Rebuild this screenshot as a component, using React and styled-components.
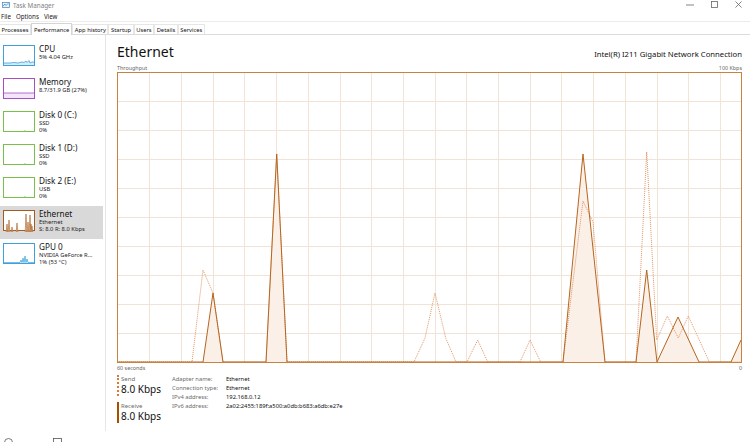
import React from "react";
import styled, { createGlobalStyle } from "styled-components";

const Global = createGlobalStyle`
  html, body { margin: 0; padding: 0; background: #fff; }
  body { font-family: "Noto Sans", "Open Sans", sans-serif; color: #000; }
  * { box-sizing: border-box; }
`;

const Window = styled.div`
  width: 750px;
  height: 442px;
  overflow: hidden;
  display: flex;
  flex-direction: column;
  background: #fff;
`;

const TitleBar = styled.div`
  height: 11px;
  display: flex;
  align-items: center;
  padding-left: 2px;
  gap: 3px;
  font-size: 6.3px;
  color: #808080;
`;

const TitleText = styled.span`
  flex: 1;
  line-height: 11px;
`;

const Controls = styled.div`
  display: flex;
  align-items: center;
  align-self: flex-start;
`;

const ControlBtn = styled.div`
  width: 24px;
  height: 9px;
  display: flex;
  justify-content: center;
  align-items: center;
`;

const MenuBar = styled.div`
  height: 11px;
  display: flex;
  align-items: center;
  gap: 5px;
  padding-left: 1px;
  font-size: 6.2px;
  color: #222;
  border-bottom: 1px solid #ececec;
`;

const TabStrip = styled.div`
  height: 13px;
  display: flex;
  align-items: flex-end;
  border-bottom: 1px solid #dcdcdc;
`;

const Tab = styled.div`
  height: ${(p) => (p.$active ? "12px" : "10px")};
  padding: 0 ${(p) => (p.$active ? "2px" : "1.5px")};
  display: flex;
  align-items: center;
  font-size: 5.8px;
  color: #111;
  background: #fff;
  border: 1px solid ${(p) => (p.$active ? "#d4d4d4" : "#e6e6e6")};
  border-bottom: none;
  margin-bottom: ${(p) => (p.$active ? "-1px" : "0")};
  ${(p) => (p.$first ? "border-left: none;" : "")}
`;

const Body = styled.div`
  flex: 1;
  display: flex;
  min-height: 0;
`;

const Sidebar = styled.div`
  width: 106px;
  height: 396px;
  border-right: 1px solid #e6e6e6;
  padding-top: 6px;
  display: flex;
  flex-direction: column;
`;

const Item = styled.div`
  height: 33px;
  width: 103px;
  display: flex;
  align-items: flex-start;
  gap: 4px;
  padding: 4px 0 0 3px;
  background: ${(p) => (p.$selected ? "#d9d9d9" : "transparent")};
`;

const Thumb = styled.div`
  width: 32px;
  height: 21px;
  border: 1px solid ${(p) => p.$color};
  background: #fff;
  flex-shrink: 0;
  svg { display: block; }
`;

const ItemText = styled.div`
  display: flex;
  flex-direction: column;
  margin-top: -1px;
`;

const ItemTitle = styled.div`
  font-size: 8.2px;
  line-height: 10px;
  height: 10px;
  color: #111;
`;

const ItemSub = styled.div`
  font-size: 5.8px;
  line-height: 7.3px;
  height: 7.3px;
  color: #222;
  white-space: nowrap;
`;

const Main = styled.div`
  flex: 1;
  padding: 8px 8px 0 11px;
  display: flex;
  flex-direction: column;
`;

const Header = styled.div`
  display: flex;
  justify-content: space-between;
  align-items: baseline;
  height: 18px;
`;

const Title = styled.div`
  font-size: 14px;
  line-height: 18px;
  color: #111;
`;

const Adapter = styled.div`
  font-size: 7.7px;
  color: #111;
`;

const AxisRow = styled.div`
  margin-top: ${(p) => (p.$top ? "2px" : "0")};
  height: 9px;
  display: flex;
  justify-content: space-between;
  align-items: center;
  font-size: 5.4px;
  color: #666;
  width: 625px;
`;

const Chart = styled.svg`
  display: block;
  width: 625px;
  height: 291px;
`;

const Stats = styled.div`
  margin-top: 3px;
  display: flex;
`;

const RateCol = styled.div`
  width: 55px;
  display: flex;
  flex-direction: column;
  gap: 6px;
`;

const Rate = styled.div`
  height: 21px;
  border-left: 2px ${(p) => (p.$dotted ? "dotted" : "solid")} ${(p) => (p.$dotted ? "#d97a3a" : "#a74f01")};
  padding-left: 2px;
  display: flex;
  flex-direction: column;
`;

const RateLabel = styled.div`
  font-size: 6px;
  line-height: 8px;
  color: #6b6b6b;
`;

const RateValue = styled.div`
  font-size: 10px;
  line-height: 12px;
  color: #111;
`;

const Details = styled.div`
  display: grid;
  grid-template-columns: 54px auto;
  grid-auto-rows: 9px;
  font-size: 5.8px;
  line-height: 9px;
  align-content: start;
`;

const DLabel = styled.div`
  color: #6b6b6b;
`;

const DValue = styled.div`
  color: #111;
`;

const Footer = styled.div`
  height: 11px;
  display: flex;
  align-items: flex-end;
  gap: 40px;
  padding-left: 4px;
  overflow: hidden;
`;

const FooterIcon = styled.div`
  height: 4px;
  overflow: hidden;
  svg { display: block; }
`;

const ORANGE = "#b5651f";
const DOT = "#de8a55";
const GRID = "#f1e3d6";
const FILL = "#fbf0e7";

const solid = [
  [117, 362], [203, 362], [213, 293], [223, 362], [266, 362], [276.7, 154], [287, 362],
  [563, 362], [583, 154], [605, 362], [636, 362], [646.7, 270], [657, 362], [678, 317],
  [699, 362], [731, 362], [741, 340],
];

const dotted = [
  [117, 362], [192, 362], [203, 270], [213, 293], [223, 362], [266, 362], [276.7, 154], [287, 362],
  [414, 362], [425, 338], [435, 293], [445.7, 338], [456, 362], [467, 362], [477.7, 340],
  [487.7, 362], [520, 362], [530, 340], [540.7, 362], [563, 362], [583, 201], [593, 222],
  [605, 362], [636, 362], [646.7, 152], [656.7, 340], [667.3, 316], [678.3, 338],
  [688.3, 316], [709.3, 362], [741, 362],
];

const rel = (pts) => pts.map(([x, y]) => `${(x - 117).toFixed(1)},${(y - 72).toFixed(1)}`).join(" ");

function ThroughputChart() {
  const vLines = [];
  for (let k = 0; k <= 18; k++) vLines.push(32.3 + 31.7 * k);
  const hLines = [];
  for (let k = 1; k <= 9; k++) hLines.push(29 * k + 0.5);
  const fillPts = rel(solid) + ` ${624},290 0,290`;
  return (
    <Chart viewBox="0 0 625 291">
      {vLines.map((x) => (
        <line key={"v" + x} x1={Math.round(x) + 0.5} x2={Math.round(x) + 0.5} y1="0" y2="291" stroke={GRID} strokeWidth="1" />
      ))}
      {hLines.map((y) => (
        <line key={"h" + y} x1="0" x2="625" y1={y} y2={y} stroke={GRID} strokeWidth="1" />
      ))}
      <polygon points={fillPts} fill={FILL} />
      <polyline points={rel(dotted)} fill="none" stroke={DOT} strokeWidth="0.9" strokeDasharray="1 1" />
      <polyline points={rel(solid)} fill="none" stroke={ORANGE} strokeWidth="1" />
      <rect x="0.5" y="0.5" width="624" height="290" fill="none" stroke="#c8823f" strokeWidth="1" />
    </Chart>
  );
}

const items = [
  { title: "CPU", sub: ["5% 4.04 GHz"], color: "#3fa1db", kind: "cpu" },
  { title: "Memory", sub: ["8.7/31.9 GB (27%)"], color: "#a54fc2", kind: "mem" },
  { title: "Disk 0 (C:)", sub: ["SSD", "0%"], color: "#78c04a", kind: "disk" },
  { title: "Disk 1 (D:)", sub: ["SSD", "0%"], color: "#78c04a", kind: "disk" },
  { title: "Disk 2 (E:)", sub: ["USB", "0%"], color: "#78c04a", kind: "disk" },
  { title: "Ethernet", sub: ["Ethernet", "S: 8.0  R: 8.0 Kbps"], color: "#a85a1c", kind: "eth", selected: true },
  { title: "GPU 0", sub: ["NVIDIA GeForce R...", "1% (53 °C)"], color: "#3fa1db", kind: "gpu" },
];

function ThumbGraph({ kind }) {
  if (kind === "cpu") {
    return (
      <svg width="30" height="19" viewBox="0 0 30 19">
        <polygon points="0,19 0,17 6,17 10,16.5 14,17 18,16 20,16.5 22,15 23,16.5 25,14.5 26,17 28,16 30,16 30,19" fill="#d8ecf8" />
        <polyline points="0,17 6,17 10,16.5 14,17 18,16 20,16.5 22,15 23,16.5 25,14.5 26,17 28,16 30,16" fill="none" stroke="#3fa1db" strokeWidth="0.8" />
      </svg>
    );
  }
  if (kind === "mem") {
    return (
      <svg width="30" height="19" viewBox="0 0 30 19">
        <rect x="0" y="14" width="30" height="5" fill="#f3e6f8" />
        <line x1="0" x2="30" y1="14" y2="14" stroke="#a54fc2" strokeWidth="0.8" />
      </svg>
    );
  }
  if (kind === "disk") {
    return (
      <svg width="30" height="19" viewBox="0 0 30 19">
        <line x1="21" x2="21" y1="18" y2="19" stroke="#78c04a" strokeWidth="0.8" />
      </svg>
    );
  }
  if (kind === "eth") {
    const spikes = [[3, 13], [5, 9], [8, 16], [13, 12], [22, 3], [24, 11], [26, 4], [27, 13], [28, 15]];
    return (
      <svg width="30" height="21" viewBox="0 0 30 21">
        {spikes.map(([x, y]) => (
          <polygon key={x} points={`${x - 0.8},21 ${x},${y} ${x + 0.8},21`} fill="#f3d9c4" stroke="#a85a1c" strokeWidth="0.6" />
        ))}
      </svg>
    );
  }
  return (
    <svg width="30" height="19" viewBox="0 0 30 19">
      <polyline points="0,18.5 16,18.5 17,16 18,18.5 19,14 20,18.5 21,12 22,18.5 23,15 24,18.5 30,18.5" fill="#d8ecf8" stroke="#3fa1db" strokeWidth="0.7" />
    </svg>
  );
}

export default function App() {
  return (
    <>
      <Global />
      <Window>
        <TitleBar>
          <svg width="8" height="7" viewBox="0 0 8 7">
            <rect x="0.5" y="0.5" width="7" height="5" fill="#e9f3fb" stroke="#5a8fbf" strokeWidth="0.8" />
            <polyline points="1,4 3,2 4,3.5 6,1.5 7,2.5" fill="none" stroke="#2f7fc1" strokeWidth="0.7" />
          </svg>
          <TitleText>Task Manager</TitleText>
          <Controls>
            <ControlBtn>
              <svg width="8" height="2" viewBox="0 0 8 2"><line x1="0" x2="8" y1="1" y2="1" stroke="#666" strokeWidth="0.8" /></svg>
            </ControlBtn>
            <ControlBtn>
              <svg width="7" height="7" viewBox="0 0 7 7"><rect x="0.5" y="0.5" width="6" height="6" fill="none" stroke="#666" strokeWidth="0.8" /></svg>
            </ControlBtn>
            <ControlBtn>
              <svg width="7" height="7" viewBox="0 0 7 7"><path d="M0.5 0.5 L6.5 6.5 M6.5 0.5 L0.5 6.5" stroke="#666" strokeWidth="0.8" /></svg>
            </ControlBtn>
          </Controls>
        </TitleBar>
        <MenuBar>
          <span>File</span>
          <span>Options</span>
          <span>View</span>
        </MenuBar>
        <TabStrip>
          <Tab $first>Processes</Tab>
          <Tab $active>Performance</Tab>
          <Tab>App history</Tab>
          <Tab>Startup</Tab>
          <Tab>Users</Tab>
          <Tab>Details</Tab>
          <Tab>Services</Tab>
        </TabStrip>
        <Body>
          <Sidebar>
            {items.map((it) => (
              <Item key={it.title} $selected={it.selected}>
                <Thumb $color={it.color}>
                  <ThumbGraph kind={it.kind} />
                </Thumb>
                <ItemText>
                  <ItemTitle>{it.title}</ItemTitle>
                  {it.sub.map((s) => (
                    <ItemSub key={s}>{s}</ItemSub>
                  ))}
                </ItemText>
              </Item>
            ))}
          </Sidebar>
          <Main>
            <Header>
              <Title>Ethernet</Title>
              <Adapter>Intel(R) I211 Gigabit Network Connection</Adapter>
            </Header>
            <AxisRow $top>
              <span>Throughput</span>
              <span>100 Kbps</span>
            </AxisRow>
            <ThroughputChart />
            <AxisRow>
              <span>60 seconds</span>
              <span>0</span>
            </AxisRow>
            <Stats>
              <RateCol>
                <Rate $dotted>
                  <RateLabel>Send</RateLabel>
                  <RateValue>8.0 Kbps</RateValue>
                </Rate>
                <Rate>
                  <RateLabel>Receive</RateLabel>
                  <RateValue>8.0 Kbps</RateValue>
                </Rate>
              </RateCol>
              <Details>
                <DLabel>Adapter name:</DLabel>
                <DValue>Ethernet</DValue>
                <DLabel>Connection type:</DLabel>
                <DValue>Ethernet</DValue>
                <DLabel>IPv4 address:</DLabel>
                <DValue>192.168.0.12</DValue>
                <DLabel>IPv6 address:</DLabel>
                <DValue>2a02:2455:189f:a500:a0db:b683:a6db:e27e</DValue>
              </Details>
            </Stats>
          </Main>
        </Body>
        <Footer>
          <FooterIcon>
            <svg width="9" height="9" viewBox="0 0 9 9"><circle cx="4.5" cy="4.5" r="4" fill="none" stroke="#555" strokeWidth="0.8" /></svg>
          </FooterIcon>
          <FooterIcon>
            <svg width="9" height="9" viewBox="0 0 9 9"><rect x="0.5" y="0.5" width="8" height="8" fill="none" stroke="#555" strokeWidth="0.8" /></svg>
          </FooterIcon>
        </Footer>
      </Window>
    </>
  );
}
